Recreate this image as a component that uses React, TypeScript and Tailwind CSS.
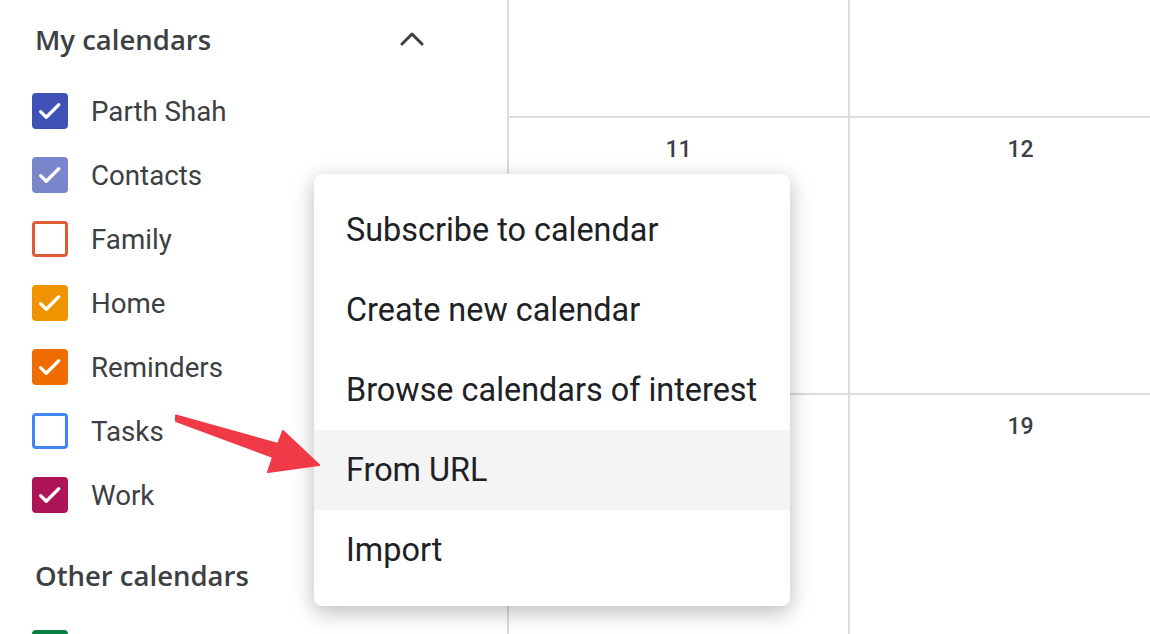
import React from 'react';

type Cal = { name: string; color: string; checked: boolean };

const MY_CALENDARS: Cal[] = [
  { name: 'Parth Shah', color: '#3f51b5', checked: true },
  { name: 'Contacts', color: '#7986cb', checked: true },
  { name: 'Family', color: '#e05a35', checked: false },
  { name: 'Home', color: '#f09300', checked: true },
  { name: 'Reminders', color: '#ef6c00', checked: true },
  { name: 'Tasks', color: '#4285f4', checked: false },
  { name: 'Work', color: '#ad1457', checked: true },
];

const MENU_ITEMS = [
  'Subscribe to calendar',
  'Create new calendar',
  'Browse calendars of interest',
  'From URL',
  'Import',
];

function CalendarCheckbox({ color, checked }: { color: string; checked: boolean }) {
  return (
    <span
      className="flex h-9 w-9 shrink-0 items-center justify-center rounded-[4px] border-[3px]"
      style={{ borderColor: color, backgroundColor: checked ? color : 'transparent' }}
    >
      {checked && (
        <svg width="30" height="30" viewBox="0 0 24 24" fill="none">
          <path d="M4.5 12.5l4.5 4.5 10-10" stroke="white" strokeWidth="2.6" strokeLinecap="round" strokeLinejoin="round" />
        </svg>
      )}
    </span>
  );
}

function SectionTitle({ children }: { children: React.ReactNode }) {
  return (
    <h2 className="pl-[3px] font-['Open_Sans',sans-serif] text-[27.5px] font-semibold leading-none text-[#3c4043]">
      {children}
    </h2>
  );
}

function Sidebar() {
  return (
    <aside className="w-[507px] shrink-0 pl-8">
      <div className="flex h-[79px] items-center justify-between pr-[83px]">
        <SectionTitle>My calendars</SectionTitle>
        <svg width="24" height="16" viewBox="0 0 24 16" fill="none" className="mt-[-2px]">
          <path d="M2 13L12 3l10 10" stroke="#3c4043" strokeWidth="3" strokeLinecap="round" strokeLinejoin="round" />
        </svg>
      </div>
      <ul>
        {MY_CALENDARS.map((c) => (
          <li key={c.name} className="flex h-16 items-center gap-[23px]">
            <CalendarCheckbox color={c.color} checked={c.checked} />
            <span className="pt-[2px] font-['Roboto',sans-serif] text-[27.7px] leading-none text-[#3c4043]">{c.name}</span>
          </li>
        ))}
      </ul>
      <div className="flex h-[88px] items-center pt-[10px]">
        <SectionTitle>Other calendars</SectionTitle>
      </div>
      <div className="flex h-16 items-start pt-[15px]">
        <CalendarCheckbox color="#0b8043" checked />
      </div>
    </aside>
  );
}

function Cell({ day, last }: { day?: string; last?: boolean }) {
  return (
    <div className={last ? 'w-[341px] shrink-0' : 'w-[341px] shrink-0 border-r-2 border-[#dadce0]'}>
      {day && (
        <p className="pt-[19px] text-center font-['Roboto',sans-serif] text-[23px] font-medium leading-[26px] text-[#3c4043]">
          {day}
        </p>
      )}
    </div>
  );
}

function MonthGrid() {
  return (
    <main className="flex flex-1 flex-col overflow-hidden border-l-2 border-[#dadce0]">
      <div className="flex h-[118px] shrink-0 border-b-2 border-[#dadce0]">
        <Cell />
        <Cell last />
      </div>
      <div className="flex h-[277px] shrink-0 border-b-2 border-[#dadce0]">
        <Cell day="11" />
        <Cell day="12" last />
      </div>
      <div className="flex flex-1">
        <Cell day="18" />
        <Cell day="19" last />
      </div>
    </main>
  );
}

function AddCalendarMenu() {
  return (
    <div className="absolute left-[314px] top-[174px] w-[476px] rounded-lg bg-white py-4 shadow-[0_6px_22px_rgba(0,0,0,0.28)]">
      {MENU_ITEMS.map((item) => (
        <div
          key={item}
          className={
            item === 'From URL'
              ? 'flex h-20 items-center bg-[#f4f4f4] pl-[32px] font-["Roboto",sans-serif] text-[32.4px] text-[#202124]'
              : 'flex h-20 items-center pl-[32px] font-["Roboto",sans-serif] text-[32.4px] text-[#202124]'
          }
        >
          {item}
        </div>
      ))}
    </div>
  );
}

function PointerArrow() {
  return (
    <svg className="pointer-events-none absolute left-0 top-0" width="1150" height="634" viewBox="0 0 1150 634">
      <path
        d="M176 415.5 L278 444 L283 431 L319 465 L268 472 L273 457 L176 421 Z"
        fill="#f03a47"
        stroke="#f03a47"
        strokeWidth="2"
        strokeLinejoin="round"
      />
    </svg>
  );
}

export default function App() {
  return (
    <div className="relative flex h-[634px] w-[1150px] overflow-hidden bg-white">
      <Sidebar />
      <MonthGrid />
      <AddCalendarMenu />
      <PointerArrow />
    </div>
  );
}
